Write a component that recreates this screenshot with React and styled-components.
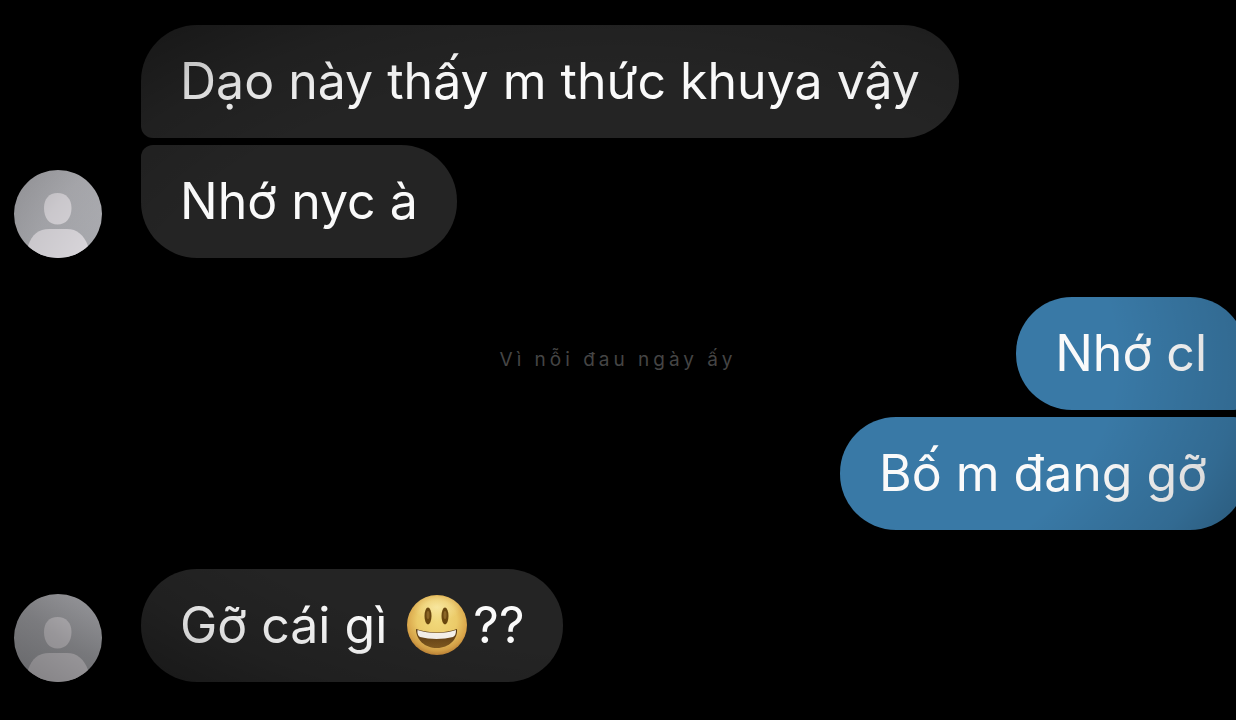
import React from 'react';
import styled, { createGlobalStyle, css } from 'styled-components';

const GlobalStyle = createGlobalStyle`
  * {
    box-sizing: border-box;
  }

  body {
    margin: 0;
    background-color: #000;
    overflow-x: hidden;
  }
`;

const Screen = styled.main`
  position: relative;
  min-height: 100vh;
  padding: 25px 0 38px 14px;
  overflow: hidden;
  background-color: #000;
  font-family: Inter, "Noto Sans", sans-serif;

  /* darkened corners */
  &::after {
    content: '';
    position: absolute;
    inset: 0;
    pointer-events: none;
    background: radial-gradient(
      ellipse farthest-corner at center,
      rgba(0, 0, 0, 0) 57%,
      rgba(0, 0, 0, 0.12) 71%,
      rgba(0, 0, 0, 0.34) 84%,
      rgba(0, 0, 0, 0.5) 100%
    );
  }
`;

const Thread = styled.div`
  display: flex;
  flex-direction: column;
  gap: 39px;
`;

const Group = styled.section`
  display: flex;
  align-items: flex-end;
  gap: 39px;
  justify-content: ${({ $own }) => ($own ? 'flex-end' : 'flex-start')};
  margin-right: ${({ $own }) => ($own ? '-10px' : '0')};
`;

const Messages = styled.div`
  display: flex;
  flex-direction: column;
  align-items: ${({ $own }) => ($own ? 'flex-end' : 'flex-start')};
  gap: 7px;
`;

const ownCorners = css`
  border-top-right-radius: ${({ $first }) => ($first ? '56px' : '12px')};
  border-bottom-right-radius: ${({ $last }) => ($last ? '56px' : '12px')};
`;

const otherCorners = css`
  border-top-left-radius: ${({ $first }) => ($first ? '56px' : '12px')};
  border-bottom-left-radius: ${({ $last }) => ($last ? '56px' : '12px')};
`;

const Bubble = styled.p`
  margin: 0;
  padding: 24px 39px 25px;
  border-radius: 56px;
  background-color: ${({ $own }) => ($own ? '#3979a6' : '#242424')};
  color: #fafafa;
  font-size: 50px;
  line-height: 64px;
  white-space: nowrap;
  ${({ $own }) => ($own ? ownCorners : otherCorners)}
`;

const AvatarIcon = styled.svg`
  display: block;
  flex: none;
  width: 88px;
  height: 88px;
  border-radius: 50%;
`;

const EmojiIcon = styled.svg`
  width: 60px;
  height: 60px;
  margin: 0 6px;
  vertical-align: -12px;
`;

const Watermark = styled.p`
  position: absolute;
  top: 50%;
  left: 50%;
  margin: 0;
  transform: translate(-50%, -50%);
  color: #454545;
  font-size: 19px;
  line-height: 24px;
  letter-spacing: 4px;
  white-space: nowrap;
`;

const Avatar = () => (
  <AvatarIcon viewBox="0 0 88 88" role="img" aria-label="Avatar">
    <defs>
      <linearGradient id="avatarBg" x1="0" y1="0" x2="0.3" y2="1">
        <stop offset="0" stopColor="#bebec3" />
        <stop offset="1" stopColor="#b3b4b9" />
      </linearGradient>
    </defs>
    <rect width="88" height="88" fill="url(#avatarBg)" />
    <path
      d="M43.500 23C52 23 57.500 29 57.500 38C57.500 48 52 54.500 43.500 54.500C35 54.500 30 48 30 38C30 29 35 23 43.500 23Z"
      fill="#e6e3e8"
    />
    <path d="M14 76C18 64 25 59 35 59H53C63 59 70 65 74 76V88H14Z" fill="#e6e3e8" />
  </AvatarIcon>
);

const Smiley = () => (
  <EmojiIcon viewBox="0 0 60 60" role="img" aria-label="😃">
    <defs>
      <radialGradient id="face" cx="0.5" cy="0.42" r="0.6">
        <stop offset="0" stopColor="#f1d97c" />
        <stop offset="0.55" stopColor="#ebca68" />
        <stop offset="0.85" stopColor="#d8a348" />
        <stop offset="1" stopColor="#b97c32" />
      </radialGradient>
      <radialGradient id="shine" cx="0.5" cy="0.4" r="0.5">
        <stop offset="0" stopColor="#fff5bd" stopOpacity="0.6" />
        <stop offset="1" stopColor="#fff5bd" stopOpacity="0" />
      </radialGradient>
      <linearGradient id="mouth" x1="0" y1="0" x2="0" y2="1">
        <stop offset="0" stopColor="#51320f" />
        <stop offset="1" stopColor="#815a20" />
      </linearGradient>
    </defs>
    <circle cx="30" cy="30" r="30" fill="url(#face)" />
    <ellipse cx="30" cy="15" rx="24" ry="14" fill="url(#shine)" />
    <ellipse cx="21" cy="21" rx="3.500" ry="8.500" fill="#68460f" />
    <ellipse cx="38" cy="21" rx="3.500" ry="8.500" fill="#68460f" />
    <ellipse cx="21" cy="20" rx="1.500" ry="4" fill="#8a6527" />
    <ellipse cx="38" cy="20" rx="1.500" ry="4" fill="#8a6527" />
    <path d="M9 34C22 38.500 38 38.500 50 34C51 44 42 53 30 53C18 53 9 45 9 34Z" fill="url(#mouth)" />
    <path d="M10.500 35C22 39 38 39 49 35C49 39 48 41 46 42C36 44.500 23 44.500 13 42C11 41 10 38 10.500 35Z" fill="#f4f0e9" />
  </EmojiIcon>
);

const groups = [
  { id: 1, own: false, messages: ['Dạo này thấy m thức khuya vậy', 'Nhớ nyc à'] },
  { id: 2, own: true, messages: ['Nhớ cl', 'Bố m đang gỡ'] },
  { id: 3, own: false, messages: [<>Gỡ cái gì <Smiley />??</>] },
];

const App = () => {
  return (
    <Screen>
      <GlobalStyle />
      <Thread>
        {groups.map(({ id, own, messages }) => (
          <Group key={id} $own={own}>
            {!own && <Avatar />}
            <Messages $own={own}>
              {messages.map((message, index) => (
                <Bubble
                  key={index}
                  $own={own}
                  $first={index === 0}
                  $last={index === messages.length - 1}
                >
                  {message}
                </Bubble>
              ))}
            </Messages>
          </Group>
        ))}
      </Thread>
      <Watermark>Vì nỗi đau ngày ấy</Watermark>
    </Screen>
  );
};

export default App;
